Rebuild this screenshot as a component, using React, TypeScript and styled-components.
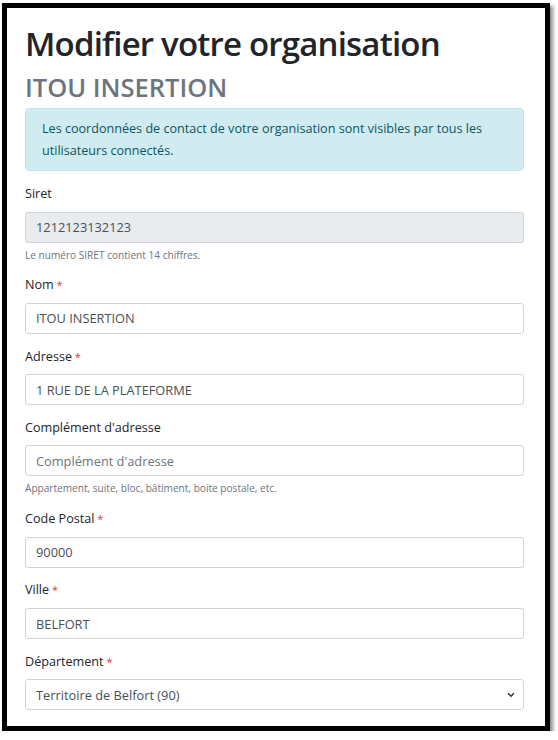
import styled, { createGlobalStyle } from 'styled-components';

const GlobalStyle = createGlobalStyle`
  html, body {
    margin: 0;
    padding: 0;
    background: #ffffff;
  }
  body {
    font-family: 'Open Sans', 'Noto Sans', sans-serif;
    color: #212529;
  }
  * {
    box-sizing: border-box;
  }
`;

type fieldType = {
  label: string;
  value?: string;
  placeholder?: string;
  required?: boolean;
  disabled?: boolean;
  help?: string;
};

const fields: fieldType[] = [
  { label: 'Siret', value: '1212123132123', disabled: true, help: 'Le numéro SIRET contient 14 chiffres.' },
  { label: 'Nom', value: 'ITOU INSERTION', required: true },
  { label: 'Adresse', value: '1 RUE DE LA PLATEFORME', required: true },
  {
    label: "Complément d'adresse",
    placeholder: "Complément d'adresse",
    help: 'Appartement, suite, bloc, bâtiment, boite postale, etc.',
  },
  { label: 'Code Postal', value: '90000', required: true },
  { label: 'Ville', value: 'BELFORT', required: true },
];

export default function App() {
  return (
    <>
      <GlobalStyle />
      <Frame>
        <Title>Modifier votre organisation</Title>
        <SubTitle>ITOU INSERTION</SubTitle>
        <Alert>
          Les coordonnées de contact de votre organisation sont visibles par tous les utilisateurs connectés.
        </Alert>
        <Form>
          {fields.map((f) => (
            <FormGroup key={f.label}>
              <Label>
                {f.label}
                {f.required && <Required> *</Required>}
              </Label>
              <Input
                defaultValue={f.value}
                placeholder={f.placeholder}
                readOnly
                $disabled={!!f.disabled}
              />
              {f.help && <Help>{f.help}</Help>}
            </FormGroup>
          ))}
          <FormGroup>
            <Label>
              Département<Required> *</Required>
            </Label>
            <SelectBox>
              <Select defaultValue="90">
                <option value="90">Territoire de Belfort (90)</option>
              </Select>
              <Chevron viewBox="0 0 8 6" width="8" height="6">
                <path d="M1 1.2 L4 4.2 L7 1.2" fill="none" stroke="#343a40" strokeWidth="1.6" />
              </Chevron>
            </SelectBox>
          </FormGroup>
        </Form>
      </Frame>
    </>
  );
}

const Frame = styled.div`
  width: 548px;
  height: 728px;
  margin: 3px 0 0 2px;
  border: 5px solid #000000;
  box-shadow: 3px 3px 4px rgba(0, 0, 0, 0.45);
  padding: 15px 21px 0 18px;
  overflow: hidden;
  display: flex;
  flex-direction: column;
`;

const Title = styled.h1`
  margin: 0;
  font-size: 33px;
  font-weight: 600;
  letter-spacing: -0.8px;
  line-height: 42px;
  color: #212529;
`;

const SubTitle = styled.h2`
  margin: 6px 0 0;
  font-size: 25.5px;
  font-weight: 600;
  line-height: 32px;
  color: #6c757d;
`;

const Alert = styled.div`
  margin-top: 5px;
  padding: 8.5px 16px;
  background-color: #d1ecf1;
  border: 1px solid #bee5eb;
  border-radius: 4px;
  color: #0c5460;
  font-size: 12.6px;
  line-height: 22px;
`;

const Form = styled.div`
  margin-top: 13px;
  display: flex;
  flex-direction: column;
`;

const FormGroup = styled.div`
  display: flex;
  flex-direction: column;
  margin-bottom: 12.7px;
`;

const Label = styled.label`
  font-size: 12.6px;
  line-height: 20px;
  margin-bottom: 7.6px;
  color: #212529;
`;

const Required = styled.span`
  color: #dc3545;
  font-size: 11px;
`;

const Input = styled.input<{ $disabled: boolean }>`
  height: 31px;
  width: 100%;
  padding: 0 10px;
  font-family: 'Open Sans', 'Noto Sans', sans-serif;
  font-size: 12.8px;
  color: #495057;
  background-color: ${(p) => (p.$disabled ? '#e9ecef' : '#ffffff')};
  border: 1px solid #ced4da;
  border-radius: 3px;
  outline: none;

  &::placeholder {
    color: #6c757d;
  }
`;

const Help = styled.small`
  margin-top: 4px;
  font-size: 10.1px;
  line-height: 16px;
  color: #6c757d;
`;

const SelectBox = styled.div`
  position: relative;
`;

const Select = styled.select`
  appearance: none;
  height: 31px;
  width: 100%;
  padding: 0 28px 0 10px;
  font-family: 'Open Sans', 'Noto Sans', sans-serif;
  font-size: 12.8px;
  color: #495057;
  background-color: #ffffff;
  border: 1px solid #ced4da;
  border-radius: 3px;
  outline: none;
`;

const Chevron = styled.svg`
  position: absolute;
  right: 9px;
  top: 13px;
  pointer-events: none;
`;
